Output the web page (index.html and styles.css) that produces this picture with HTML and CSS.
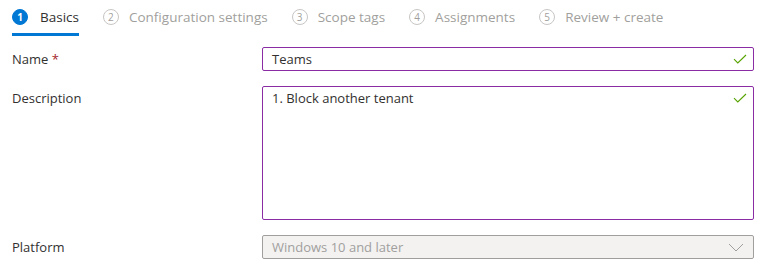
FILE: index.html
```html
<!DOCTYPE html>
<html lang="en">

<head>
    <meta charset="UTF-8">
    <meta name="viewport" content="width=device-width, initial-scale=1.0">
    <title>Create profile</title>
    <link rel="stylesheet" href="styles.css">
</head>

<body>
    <div class="tabs">
        <div class="tab active">
            <span class="step">1</span>
            <span class="tab-label">Basics</span>
        </div>
        <div class="tab">
            <span class="step">2</span>
            <span class="tab-label">Configuration settings</span>
        </div>
        <div class="tab">
            <span class="step">3</span>
            <span class="tab-label">Scope tags</span>
        </div>
        <div class="tab">
            <span class="step">4</span>
            <span class="tab-label">Assignments</span>
        </div>
        <div class="tab">
            <span class="step">5</span>
            <span class="tab-label">Review + create</span>
        </div>
    </div>

    <div class="form">
        <div class="row">
            <label class="label">Name <span class="req">*</span></label>
            <div class="field input">
                <span class="value">Teams</span>
                <svg class="check" width="14" height="10" viewBox="0 0 14 10">
                    <path d="M1 5.2 L4.8 9 L13 1" fill="none" stroke="#57a300" stroke-width="1.1" />
                </svg>
            </div>
        </div>
        <div class="row">
            <label class="label">Description</label>
            <div class="field textarea">
                <span class="value">1. Block another tenant</span>
                <svg class="check" width="14" height="10" viewBox="0 0 14 10">
                    <path d="M1 5.2 L4.8 9 L13 1" fill="none" stroke="#57a300" stroke-width="1.1" />
                </svg>
            </div>
        </div>
        <div class="row">
            <label class="label">Platform</label>
            <div class="field select">
                <span class="value">Windows 10 and later</span>
                <svg class="chevron" width="16" height="9" viewBox="0 0 16 9">
                    <path d="M1 1 L8 8 L15 1" fill="none" stroke="#a19f9d" stroke-width="1" />
                </svg>
            </div>
        </div>
    </div>
</body>

</html>
```

FILE: styles.css
```css
* {
    margin: 0;
    padding: 0;
    box-sizing: border-box;
}

body {
    font-family: "Open Sans", "Noto Sans", sans-serif;
    font-size: 13px;
    color: #323130;
    background: #fff;
    padding: 0 9px 0 12px;
}

.tabs {
    display: flex;
    gap: 24px;
    height: 36px;
}

.tab {
    display: flex;
    align-items: center;
    gap: 10px;
    color: #a19f9d;
    font-size: 13.5px;
    border-bottom: 3px solid transparent;
    padding-top: 1px;
}

.tab.active {
    color: #323130;
    border-bottom-color: #0078d4;
    gap: 12px;
}

.step {
    width: 16px;
    height: 16px;
    border-radius: 50%;
    border: 1px solid #c8c6c4;
    font-size: 10px;
    display: flex;
    align-items: center;
    justify-content: center;
}

.tab.active .step {
    background: #0078d4;
    border-color: #0078d4;
    color: #fff;
    font-weight: 700;
}

.form {
    display: flex;
    flex-direction: column;
    gap: 15px;
    margin-top: 11px;
}

.row {
    display: grid;
    grid-template-columns: 250px 1fr;
}

.label {
    line-height: 24px;
}

.req {
    color: #a4262c;
}

.field {
    display: flex;
    justify-content: space-between;
    align-items: flex-start;
    border: 1px solid #8a2da5;
    border-radius: 2px;
    padding: 0 6px 0 9px;
}

.value {
    line-height: 22px;
}

.input {
    height: 24px;
}

.textarea {
    height: 134px;
}

.check {
    margin-top: 6px;
}

.select {
    height: 24px;
    background: #f3f2f1;
    border-color: #a19f9d;
    color: #a19f9d;
    padding-right: 9px;
}

.chevron {
    margin-top: 7px;
}
```
